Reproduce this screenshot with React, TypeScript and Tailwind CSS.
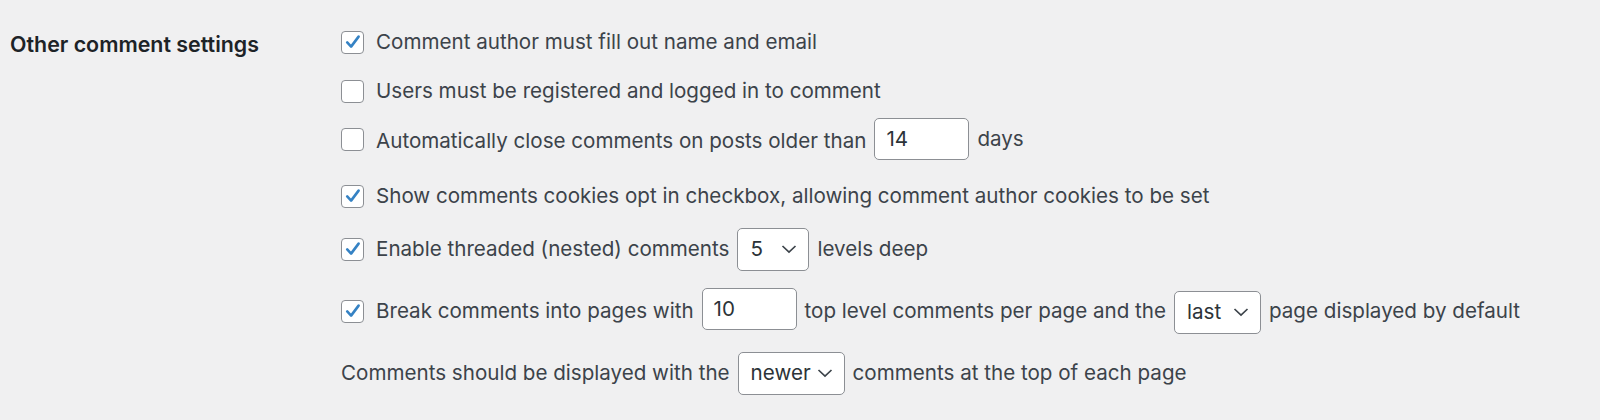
import React from "react";

function Box({ checked }: { checked?: boolean }) {
  return (
    <span className="mr-[12px] flex h-[23px] w-[23px] shrink-0 items-center justify-center rounded-[4px] border-[1.5px] border-[#8c8f94] bg-white">
      {checked && (
        <svg viewBox="0 0 20 20" className="h-[20px] w-[20px]">
          <path d="M4.2 10.4 L8.1 14.6 L15.6 4.6" fill="none" stroke="#3582c4" strokeWidth="2.6" strokeLinecap="round" strokeLinejoin="round" />
        </svg>
      )}
    </span>
  );
}

function Num({ value, className }: { value: string; className?: string }) {
  return (
    <span className={`mx-[8px] flex h-[42px] w-[95px] items-center rounded-[5px] border-[1.5px] border-[#8c8f94] bg-white pl-[11px] text-[#2c3338] ${className ?? ""}`}>
      {value}
    </span>
  );
}

function Sel({ value, w, className }: { value: string; w: string; className?: string }) {
  return (
    <span className={`mx-[8px] flex h-[43px] items-center justify-between rounded-[5px] border-[1.5px] border-[#8c8f94] bg-white pl-[12px] pr-[11px] text-[#2c3338] ${w} ${className ?? ""}`}>
      <span>{value}</span>
      <svg viewBox="0 0 16 16" className="h-[16px] w-[16px]">
        <path d="M1.5 5 L8 11 L14.5 5" fill="none" stroke="#3c434a" strokeWidth="1.7" />
      </svg>
    </span>
  );
}

export default function App() {
  return (
    <div className="h-[420px] w-[1600px] bg-[#f0f0f1] font-['Inter',sans-serif] text-[20.6px] text-[#3c434a]">
      <div className="flex">
        <div className="w-[341px] shrink-0 pl-[10px] pt-[28px] text-[21.4px] font-semibold text-[#1d2327]">
          Other comment settings
        </div>
        <div className="flex flex-col pt-[20px]">
          <div className="flex h-[44px] items-center">
            <Box checked />
            Comment author must fill out name and email
          </div>
          <div className="mt-[5px] flex h-[44px] items-center">
            <Box />
            Users must be registered and logged in to comment
          </div>
          <div className="mt-[4px] flex h-[44px] items-center">
            <Box />
            <span className="pt-[5px]">Automatically close comments on posts older than</span>
            <Num value="14" />
            days
          </div>
          <div className="mt-[13px] flex h-[44px] items-center">
            <Box checked />
            Show comments cookies opt in checkbox, allowing comment author cookies to be set
          </div>
          <div className="mt-[9px] flex h-[44px] items-center">
            <Box checked />
            Enable threaded (nested) comments
            <Sel value="5" w="w-[72px]" />
            levels deep
          </div>
          <div className="mt-[18px] flex h-[44px] items-center">
            <Box checked />
            Break comments into pages with
            <Num value="10" className="-translate-y-[2px]" />
            top level comments per page and the
            <Sel value="last" w="w-[87px]" className="translate-y-[1px]" />
            page displayed by default
          </div>
          <div className="mt-[18px] flex h-[44px] items-center">
            Comments should be displayed with the
            <Sel value="newer" w="w-[107px]" />
            comments at the top of each page
          </div>
        </div>
      </div>
    </div>
  );
}
